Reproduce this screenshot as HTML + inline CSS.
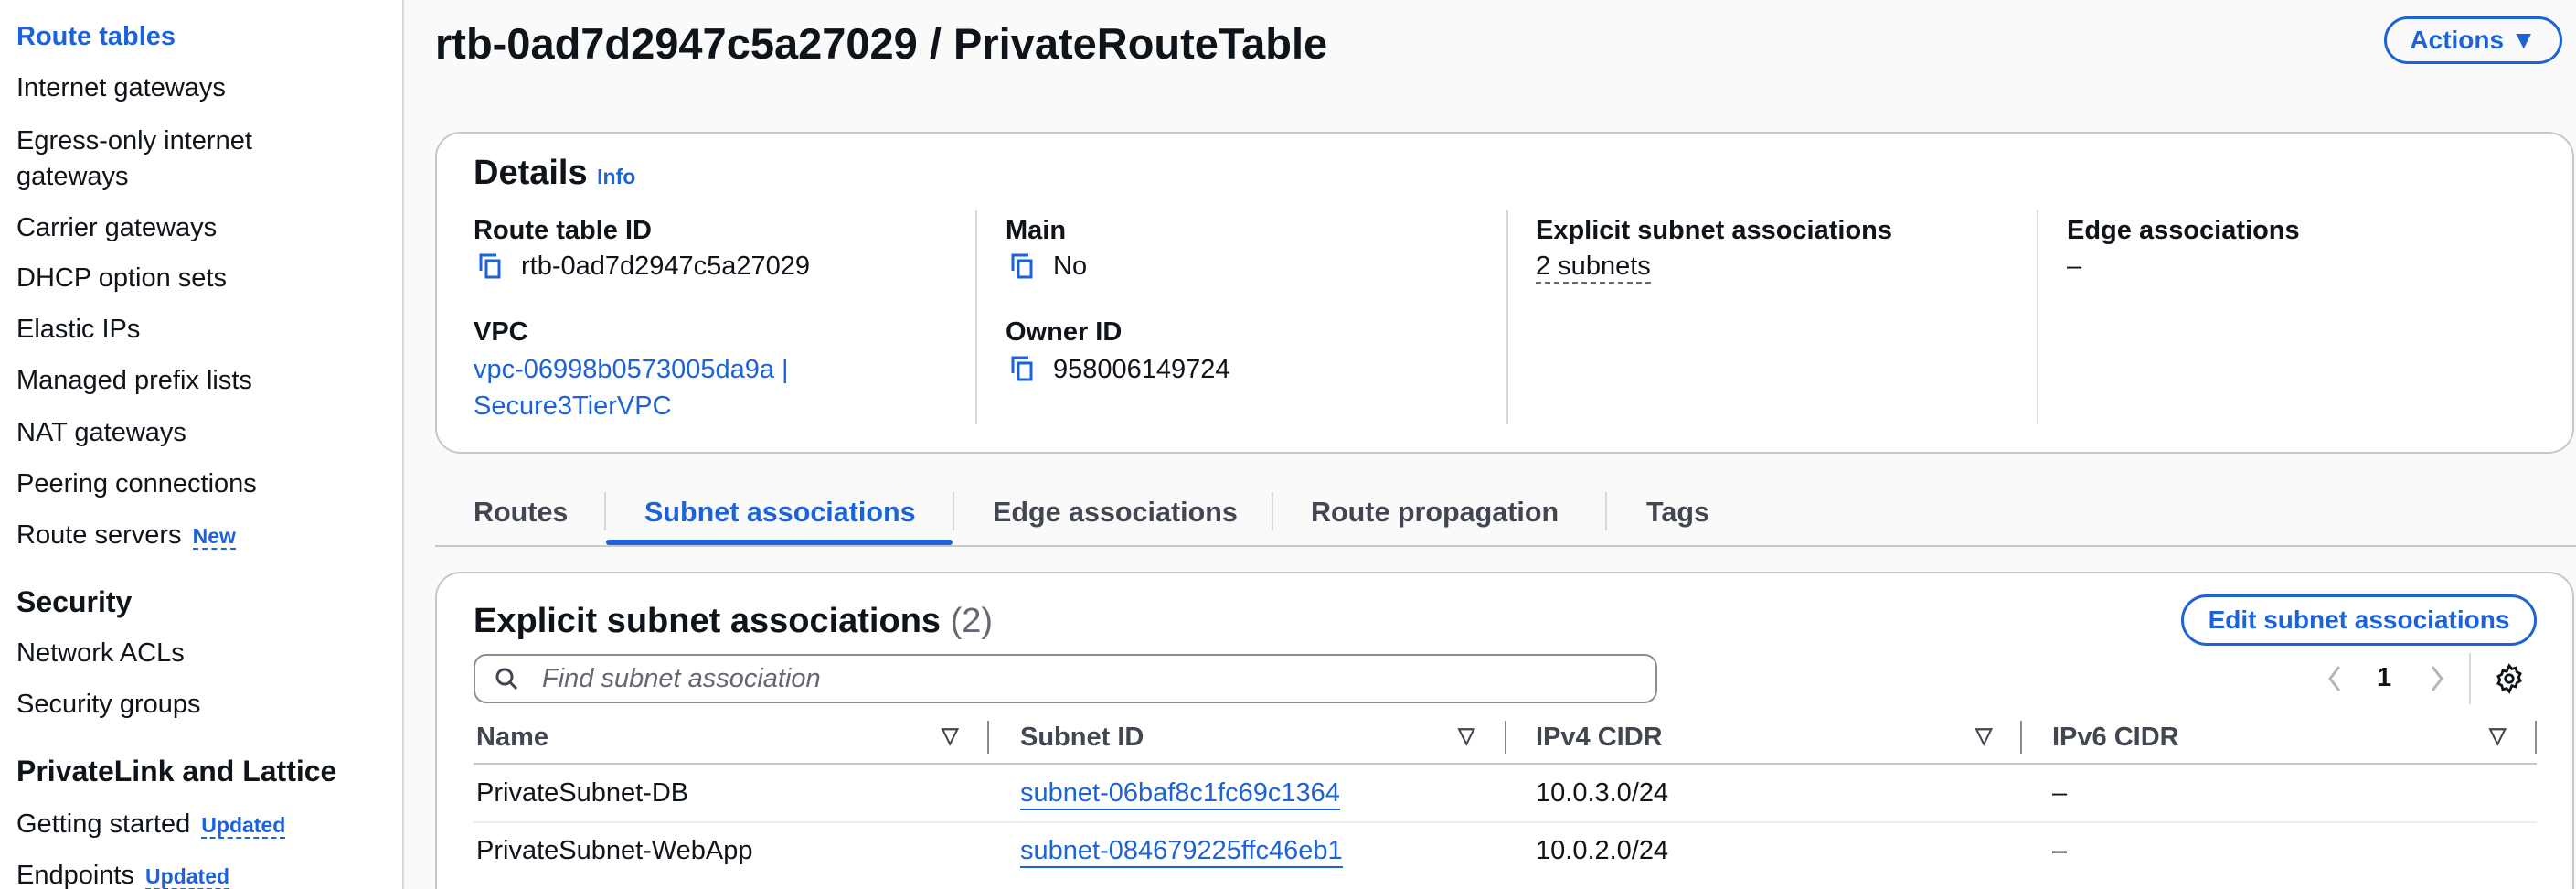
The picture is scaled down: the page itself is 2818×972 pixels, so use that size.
<!DOCTYPE html>
<html><head><meta charset="utf-8"><style>
*{box-sizing:border-box;margin:0;padding:0}
html{width:2818px;height:972px;overflow:hidden}
body{width:2818px;height:972px;overflow:hidden;background:#fafafa;font-family:"Liberation Sans",sans-serif;color:#0f141a;position:relative;font-size:29px}
.wrap{position:absolute;left:0;top:0;width:2818px;height:972px;overflow:hidden}
.a{position:absolute;white-space:nowrap}
.side{position:absolute;left:0;top:0;width:442px;height:972px;background:#fff;border-right:2px solid #d5d9de}
.b{font-weight:bold}
.blue{color:#1d63d8}
.card{position:absolute;background:#fff;border:2px solid #c6c6cd;border-radius:28px}
.lbl{font-weight:bold}
.new{color:#1d63d8;font-weight:bold;font-size:23px;border-bottom:2px dashed #1d63d8}
.vd{position:absolute;width:2px;background:#d5d9de}
.copy{position:absolute;width:30px;height:30px}
.ul{border-bottom:2px solid #1d63d8}
</style></head><body><div class="wrap">
<div class="side">
<div class="a b blue" style="left:18px;top:24px">Route tables</div>
<div class="a" style="left:18px;top:80px">Internet gateways</div>
<div class="a" style="left:18px;top:138px">Egress-only internet</div>
<div class="a" style="left:18px;top:177px">gateways</div>
<div class="a" style="left:18px;top:233px">Carrier gateways</div>
<div class="a" style="left:18px;top:288px">DHCP option sets</div>
<div class="a" style="left:18px;top:344px">Elastic IPs</div>
<div class="a" style="left:18px;top:400px">Managed prefix lists</div>
<div class="a" style="left:18px;top:457px">NAT gateways</div>
<div class="a" style="left:18px;top:513px">Peering connections</div>
<div class="a" style="left:18px;top:569px">Route servers <span class="new" style="margin-left:4px">New</span></div>
<div class="a b" style="left:18px;top:640px;font-size:32px">Security</div>
<div class="a" style="left:18px;top:698px">Network ACLs</div>
<div class="a" style="left:18px;top:754px">Security groups</div>
<div class="a b" style="left:18px;top:825px;font-size:32px">PrivateLink and Lattice</div>
<div class="a" style="left:18px;top:885px">Getting started <span class="new" style="margin-left:4px">Updated</span></div>
<div class="a" style="left:18px;top:941px">Endpoints <span class="new" style="margin-left:4px">Updated</span></div>
</div>
<div class="a b" style="left:476px;top:20px;font-size:47px">rtb-0ad7d2947c5a27029 / PrivateRouteTable</div>
<div class="a b blue" style="left:2608px;top:18px;width:195px;height:52px;border:3px solid #1d63d8;border-radius:26px;font-size:28px;line-height:46px;text-align:center">Actions ▼</div>

<div class="card" style="left:476px;top:144px;width:2340px;height:352px"></div>
<div class="a b" style="left:518px;top:168px;font-size:38px">Details <span class="blue" style="font-size:23px">Info</span></div>
<div class="vd" style="left:1067px;top:230px;height:234px"></div>
<div class="vd" style="left:1648px;top:230px;height:234px"></div>
<div class="vd" style="left:2228px;top:230px;height:234px"></div>
<div class="a lbl" style="left:518px;top:236px">Route table ID</div>
<div class="a" style="left:570px;top:275px">rtb-0ad7d2947c5a27029</div>
<div class="a lbl" style="left:518px;top:347px">VPC</div>
<div class="a blue" style="left:518px;top:388px">vpc-06998b0573005da9a |</div>
<div class="a blue" style="left:518px;top:428px">Secure3TierVPC</div>
<div class="a lbl" style="left:1100px;top:236px">Main</div>
<div class="a" style="left:1152px;top:275px">No</div>
<div class="a lbl" style="left:1100px;top:347px">Owner ID</div>
<div class="a" style="left:1152px;top:388px">958006149724</div>
<div class="a lbl" style="left:1680px;top:236px">Explicit subnet associations</div>
<div class="a" style="left:1680px;top:275px;border-bottom:2px dashed #5f6b7a">2 subnets</div>
<div class="a lbl" style="left:2261px;top:236px">Edge associations</div>
<div class="a" style="left:2261px;top:275px">–</div>
<svg class="copy" style="left:523px;top:276px" viewBox="0 0 30 30"><path d="M3 20V3h17" fill="none" stroke="#1d63d8" stroke-width="3"/><rect x="9" y="9" width="14" height="18" fill="none" stroke="#1d63d8" stroke-width="3"/></svg>
<svg class="copy" style="left:1105px;top:276px" viewBox="0 0 30 30"><path d="M3 20V3h17" fill="none" stroke="#1d63d8" stroke-width="3"/><rect x="9" y="9" width="14" height="18" fill="none" stroke="#1d63d8" stroke-width="3"/></svg>
<svg class="copy" style="left:1105px;top:388px" viewBox="0 0 30 30"><path d="M3 20V3h17" fill="none" stroke="#1d63d8" stroke-width="3"/><rect x="9" y="9" width="14" height="18" fill="none" stroke="#1d63d8" stroke-width="3"/></svg>

<div class="a" style="left:476px;top:596px;width:2342px;height:2px;background:#c6c6cd"></div>
<div class="a b" style="left:518px;top:543px;font-size:30.5px;color:#424650">Routes</div>
<div class="a b blue" style="left:705px;top:543px;font-size:30.5px">Subnet associations</div>
<div class="a b" style="left:1086px;top:543px;font-size:30.5px;color:#424650">Edge associations</div>
<div class="a b" style="left:1434px;top:543px;font-size:30.5px;color:#424650">Route propagation</div>
<div class="a b" style="left:1801px;top:543px;font-size:30.5px;color:#424650">Tags</div>
<div class="vd" style="left:661px;top:538px;height:42px"></div>
<div class="vd" style="left:1042px;top:538px;height:42px"></div>
<div class="vd" style="left:1391px;top:538px;height:42px"></div>
<div class="vd" style="left:1756px;top:538px;height:42px"></div>
<div class="a" style="left:663px;top:590px;width:379px;height:6px;background:#1d63d8;border-radius:3px"></div>

<div class="card" style="left:476px;top:625px;width:2340px;height:347px;border-bottom:none;border-radius:28px 28px 0 0"></div>
<div class="a b" style="left:518px;top:658px;font-size:38px">Explicit subnet associations <span style="font-weight:normal;color:#656871">(2)</span></div>
<div class="a b blue" style="left:2386px;top:650px;width:389px;height:56px;border:3px solid #1d63d8;border-radius:28px;line-height:50px;text-align:center;font-size:28px">Edit subnet associations</div>
<div class="a" style="left:518px;top:715px;width:1295px;height:54px;border:2px solid #8c8c94;border-radius:14px"></div>
<svg class="a" style="left:540px;top:728px" width="28" height="28" viewBox="0 0 28 28"><circle cx="12" cy="12" r="8" fill="none" stroke="#424650" stroke-width="3"/><path d="M18 18l7 7" stroke="#424650" stroke-width="3"/></svg>
<div class="a" style="left:593px;top:726px;font-style:italic;color:#656871">Find subnet association</div>
<svg class="a" style="left:2544px;top:726px" width="20" height="32" viewBox="0 0 20 32"><path d="M15 3L5 16l10 13" fill="none" stroke="#b4b4bb" stroke-width="3"/></svg>
<div class="a b" style="left:2600px;top:725px">1</div>
<svg class="a" style="left:2656px;top:726px" width="20" height="32" viewBox="0 0 20 32"><path d="M5 3l10 13L5 29" fill="none" stroke="#b4b4bb" stroke-width="3"/></svg>
<div class="vd" style="left:2701px;top:714px;height:56px"></div>
<svg class="a" style="left:2728px;top:724px" width="34" height="36" viewBox="0 0 24 24"><path d="M12 2l2 2.5 3-.8.8 3 2.7 1.5-1.3 2.8 1.3 2.8-2.7 1.5-.8 3-3-.8L12 22l-2-2.5-3 .8-.8-3L3.5 15.8 4.8 13 3.5 10.2 6.2 8.7l.8-3 3 .8z" fill="none" stroke="#0f141a" stroke-width="2"/><circle cx="12" cy="12" r="3" fill="none" stroke="#0f141a" stroke-width="2"/></svg>

<div class="a b" style="left:521px;top:790px;color:#424650">Name</div>
<div class="a b" style="left:1116px;top:790px;color:#424650">Subnet ID</div>
<div class="a b" style="left:1680px;top:790px;color:#424650">IPv4 CIDR</div>
<div class="a b" style="left:2245px;top:790px;color:#424650">IPv6 CIDR</div>
<div class="a b" style="left:1030px;top:790px;font-size:24px;color:#424650">▽</div>
<div class="a b" style="left:1595px;top:790px;font-size:24px;color:#424650">▽</div>
<div class="a b" style="left:2161px;top:790px;font-size:24px;color:#424650">▽</div>
<div class="a b" style="left:2723px;top:790px;font-size:24px;color:#424650">▽</div>
<div class="vd" style="left:1080px;top:788px;height:36px;background:#8c8c94"></div>
<div class="vd" style="left:1646px;top:788px;height:36px;background:#8c8c94"></div>
<div class="vd" style="left:2210px;top:788px;height:36px;background:#8c8c94"></div>
<div class="vd" style="left:2773px;top:788px;height:36px;background:#8c8c94"></div>
<div class="a" style="left:518px;top:834px;width:2257px;height:2px;background:#c6c6cd"></div>
<div class="a" style="left:521px;top:851px">PrivateSubnet-DB</div>
<div class="a blue ul" style="left:1116px;top:851px">subnet-06baf8c1fc69c1364</div>
<div class="a" style="left:1680px;top:851px">10.0.3.0/24</div>
<div class="a" style="left:2245px;top:851px">–</div>
<div class="a" style="left:518px;top:898px;width:2257px;height:2px;background:#ebebf0"></div>
<div class="a" style="left:521px;top:914px">PrivateSubnet-WebApp</div>
<div class="a blue ul" style="left:1116px;top:914px">subnet-084679225ffc46eb1</div>
<div class="a" style="left:1680px;top:914px">10.0.2.0/24</div>
<div class="a" style="left:2245px;top:914px">–</div>
</div></body></html>
